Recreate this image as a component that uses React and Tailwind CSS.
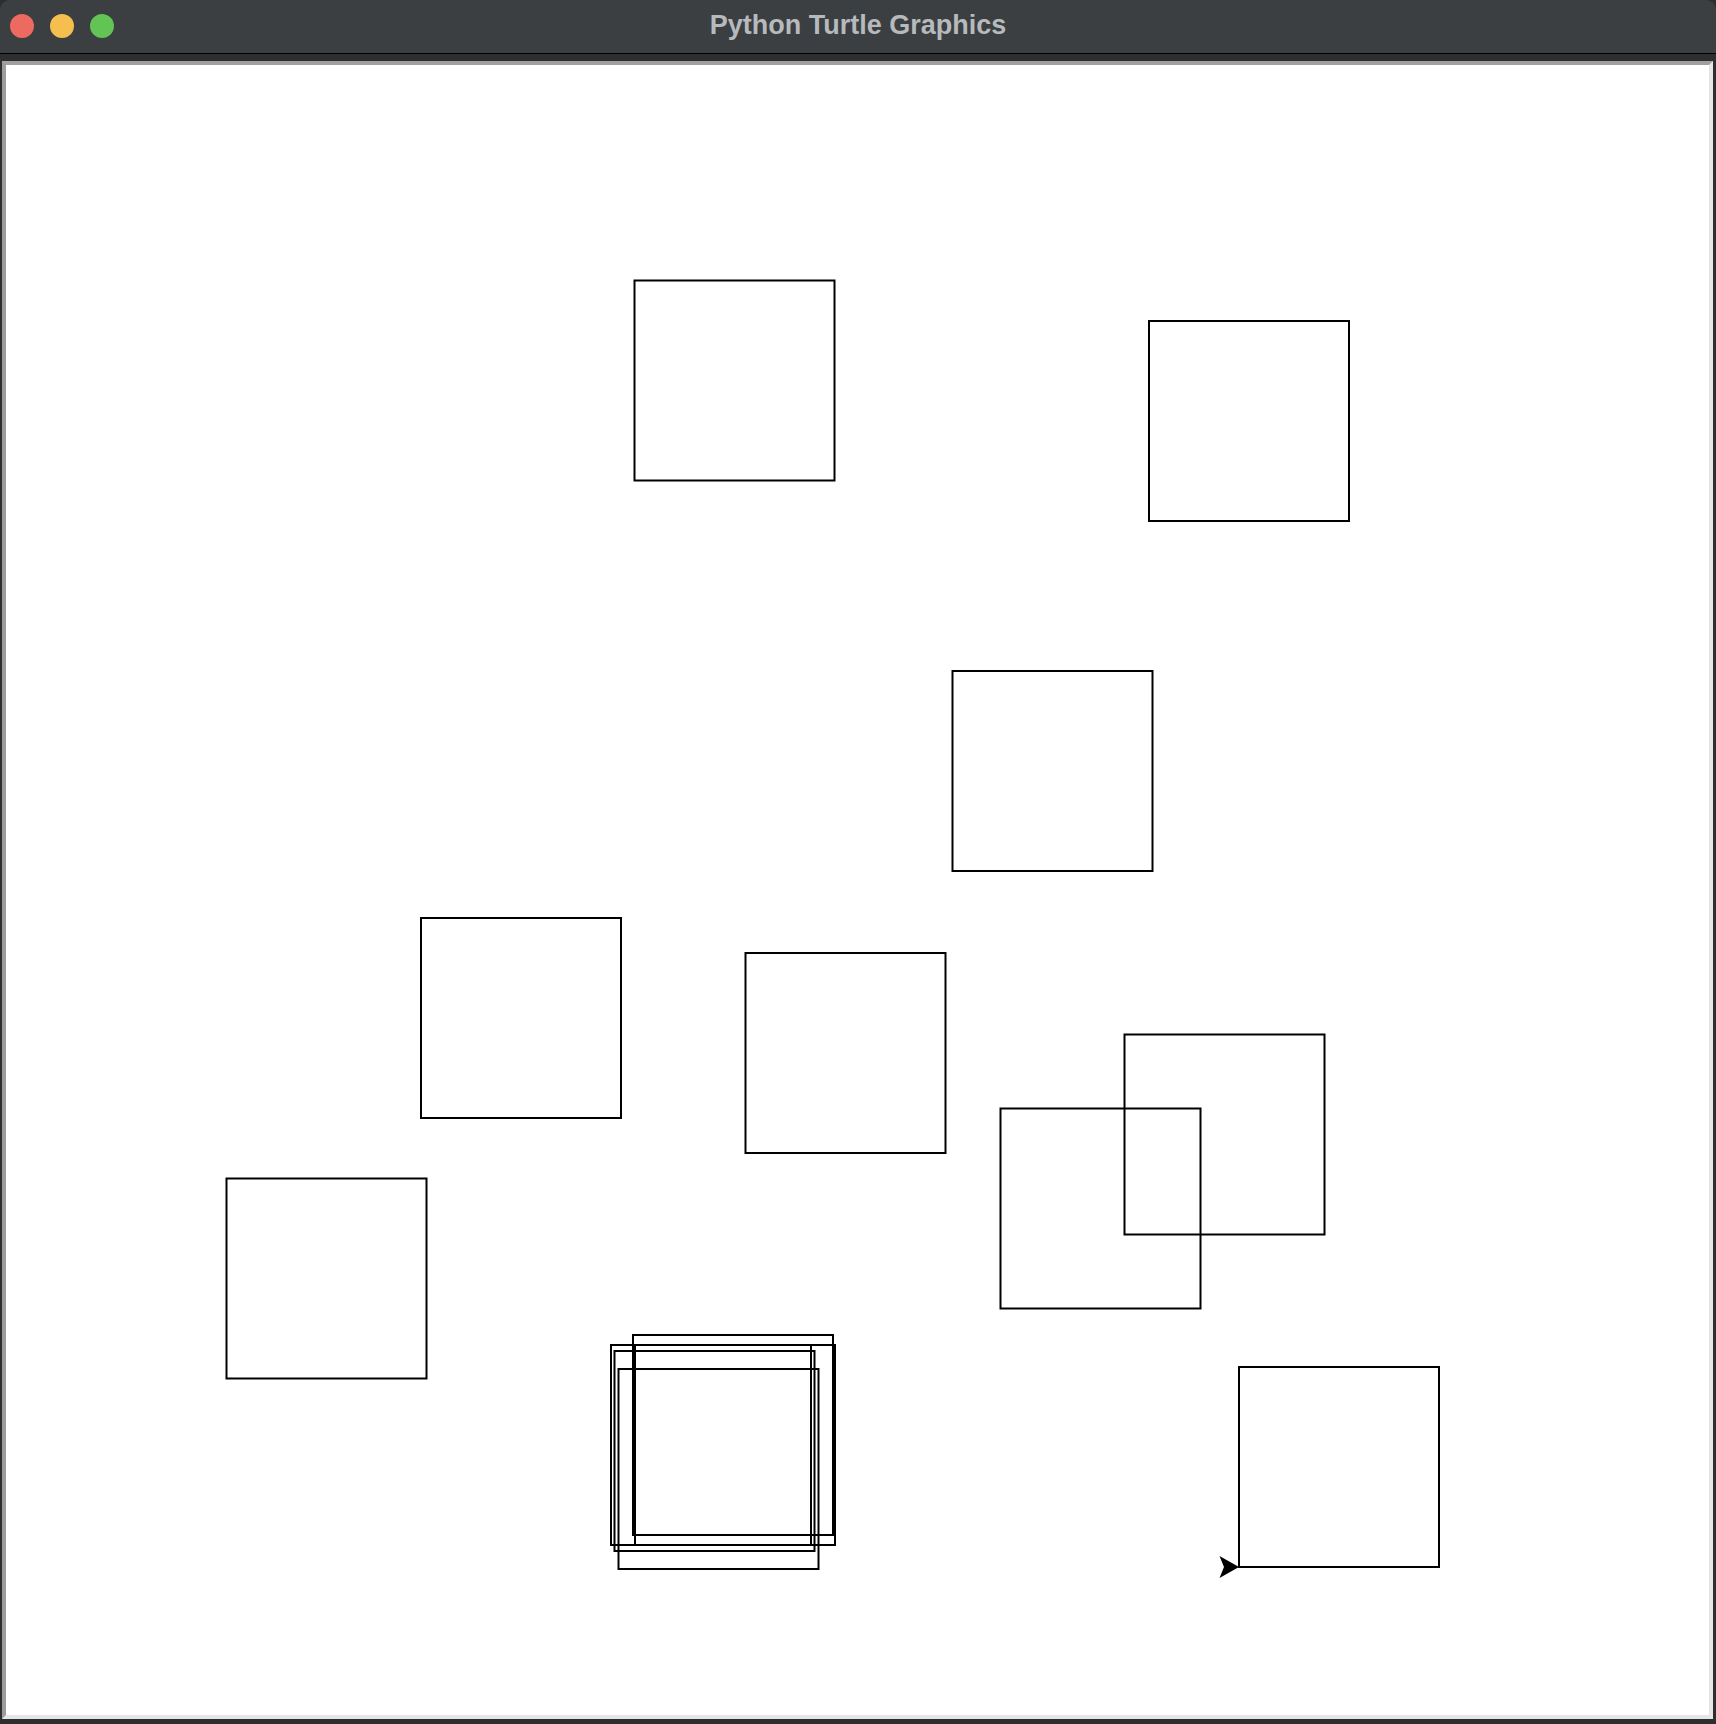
import React from "react";

const squares = [
  [634.5, 280.5],
  [1149, 321],
  [952.5, 671],
  [421, 918],
  [745.5, 953],
  [1124.5, 1034.5],
  [1000.5, 1108.5],
  [226.5, 1178.5],
  [1239, 1367],
  [633, 1335],
  [611, 1345],
  [635, 1345],
  [614.5, 1351],
  [618.5, 1369],
];

export default function App() {
  return (
    <div className="relative w-[1716px] h-[1724px] bg-[#2e2e2e] flex flex-col overflow-hidden">
      <div className="relative h-[54px] shrink-0 bg-[#3b3f42] rounded-t-[10px] border-b border-black flex items-center">
        <div className="flex items-center gap-[16px] pl-[10px] pb-[2px]">
          <span className="block w-[24px] h-[24px] rounded-full bg-[#ec6a5f]" />
          <span className="block w-[24px] h-[24px] rounded-full bg-[#f4bf4f]" />
          <span className="block w-[24px] h-[24px] rounded-full bg-[#61c454]" />
        </div>
        <div className="absolute inset-0 flex items-center justify-center pb-[3px]">
          <span className="text-[27px] font-bold text-[#b6babd] font-['Liberation_Sans',Arial,sans-serif] tracking-[0px]">
            Python Turtle Graphics
          </span>
        </div>
      </div>
      <div className="flex-1 pt-[7px] pl-[2px] pr-[3px] pb-[5px] flex">
        <div className="relative flex-1 bg-white border-t-4 border-l-4 border-t-[#a0a0a0] border-l-[#9c9c9c] border-r-4 border-b-4 border-r-[#e6e6e6] border-b-[#e6e6e6]">
          <svg className="absolute inset-0 w-full h-full" xmlns="http://www.w3.org/2000/svg">
            <g transform="translate(-6,-65)">
              {squares.map(([x, y], i) => (
                <rect key={i} x={x} y={y} width="200" height="200" fill="none" stroke="#000" strokeWidth="2" />
              ))}
              <polygon points="1239,1567 1219.5,1556 1224,1567 1219.5,1578" fill="#000" />
            </g>
          </svg>
        </div>
      </div>
    </div>
  );
}
